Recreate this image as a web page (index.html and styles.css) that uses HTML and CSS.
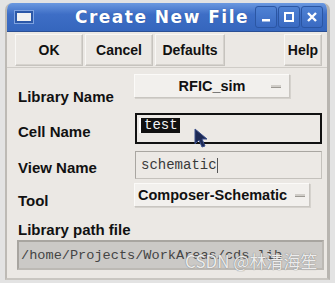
FILE: index.html
```
<!DOCTYPE html>
<html lang="en">

<head>
    <meta charset="UTF-8">
    <title>Create New File</title>
    <link rel="stylesheet" href="styles.css">
</head>

<body>
    <div class="window">
        <div class="titlebar">
            <span class="win-icon"></span>
            <span class="title">Create New File</span>
            <div class="win-buttons">
                <span class="wbtn"><svg width="14" height="14" viewBox="0 0 14 14"><rect x="3" y="9" width="8" height="2.5" fill="#fff"/></svg></span>
                <span class="wbtn"><svg width="14" height="14" viewBox="0 0 14 14"><rect x="3" y="3" width="8" height="8" fill="none" stroke="#fff" stroke-width="2"/></svg></span>
                <span class="wbtn"><svg width="14" height="14" viewBox="0 0 14 14"><path d="M3 3 L11 11 M11 3 L3 11" stroke="#fff" stroke-width="2.4"/></svg></span>
            </div>
        </div>

        <div class="toolbar">
            <button class="btn btn-ok">OK</button>
            <button class="btn btn-cancel">Cancel</button>
            <button class="btn btn-defaults">Defaults</button>
            <span class="spacer"></span>
            <button class="btn btn-help">Help</button>
        </div>

        <div class="form">
            <div class="row row-lib">
                <span class="label">Library Name</span>
                <div class="combo combo-lib">RFIC_sim<span class="combo-mark"></span></div>
            </div>
            <div class="row row-cell">
                <span class="label">Cell Name</span>
                <div class="field field-focus"><span class="sel">test</span></div>
            </div>
            <div class="row row-view">
                <span class="label">View Name</span>
                <div class="field">schematic<span class="caret"></span></div>
            </div>
            <div class="row row-tool">
                <span class="label">Tool</span>
                <div class="combo combo-tool">Composer-Schematic<span class="combo-mark"></span></div>
            </div>
            <div class="label path-label">Library path file</div>
            <div class="field field-path">/home/Projects/WorkAreas/cds.lib</div>
        </div>

        <svg class="pointer" width="16" height="22" viewBox="0 0 16 22">
            <path d="M1 1 L1 16 L5 12 L8 19 L11 18 L8 11 L13 11 Z" fill="#1d2a55" stroke="#3b4f8a" stroke-width="1"/>
        </svg>
        <div class="watermark">CSDN @林清海笙</div>
    </div>
</body>

</html>
```

FILE: styles.css
```
body {
    margin: 0;
    background: #e3e3e3;
    font-family: 'Liberation Sans', Arial, sans-serif;
}

.window {
    position: relative;
    margin: 3px 0 0 5px;
    width: 320px;
    height: 275px;
    background: #ebe8e4;
    border-left: 2px solid #bdbab5;
    border-right: 3px solid #b8b5b0;
    border-bottom: 2px solid #c9c6c1;
    border-radius: 7px 7px 0 0;
    overflow: hidden;
}

.titlebar {
    height: 28px;
    display: flex;
    align-items: center;
    background: linear-gradient(#6a98e0, #3e6ec6 40%, #3566bd);
    border-bottom: 1px solid #2a4f94;
    padding: 0 4px 0 8px;
}

.win-icon {
    width: 14px;
    height: 8px;
    background: #f2f2f2;
    border: 2px solid #2c58a8;
    box-shadow: 0 0 0 1px #7fa3e0;
}

.title {
    flex: 1;
    text-align: center;
    color: #fff;
    font-family: 'DejaVu Sans', sans-serif;
    font-weight: bold;
    font-size: 17px;
    letter-spacing: 1.5px;
    padding-left: 36px;
    text-shadow: 0 0 1px #2a4f94;
}

.win-buttons {
    display: flex;
    gap: 1px;
}

.wbtn {
    width: 20px;
    height: 20px;
    border: 1px solid #2b56a3;
    border-radius: 3px;
    background: linear-gradient(#4f82d4, #3a6ac2);
    display: flex;
    align-items: center;
    justify-content: center;
}

.toolbar {
    display: flex;
    gap: 2px;
    padding: 2px 5px 0 8px;
    height: 33px;
    border-bottom: 1px solid #cfccc7;
}

.btn {
    height: 32px;
    background: #ebe8e4;
    border: 1px solid #c6c3be;
    border-top-color: #f8f7f5;
    border-left-color: #f8f7f5;
    box-shadow: inset -1px -1px 0 #d6d3ce;
    font-family: 'Liberation Sans', Arial, sans-serif;
    font-weight: bold;
    font-size: 14px;
    color: #111;
    padding: 0;
}

.btn-ok {
    width: 68px;
}

.btn-cancel {
    width: 68px;
}

.btn-defaults {
    width: 70px;
}

.btn-help {
    width: 38px;
}

.spacer {
    flex: 1;
}

.form {
    padding: 6px 5px 0 11px;
}

.row {
    display: flex;
    align-items: center;
    justify-content: space-between;
}

.label {
    font-weight: bold;
    font-size: 15px;
    color: #111;
}

.row-lib {
    height: 26px;
    align-items: flex-start;
}

.row-lib .label {
    margin-top: 14px;
}

.row-cell {
    margin-top: 13px;
    height: 31px;
}

.row-cell .label {
    margin-top: 6px;
}

.row-view {
    margin-top: 7px;
    height: 28px;
}

.row-view .label {
    margin-top: 5px;
}

.row-tool {
    margin-top: 4px;
    height: 24px;
}

.row-tool .label {
    margin-top: 10px;
}

.combo {
    box-sizing: border-box;
    height: 24px;
    background: #f2f0ed;
    border: 1px solid #c9c6c1;
    border-top-color: #fbfaf8;
    border-left-color: #fbfaf8;
    box-shadow: 1px 1px 0 #d5d2cd;
    display: flex;
    align-items: center;
    justify-content: center;
    position: relative;
    font-weight: bold;
    font-size: 14.5px;
    color: #111;
}

.combo-lib {
    width: 156px;
    margin-right: 32px;
}

.combo-tool {
    width: 176px;
    margin-right: 12px;
    justify-content: flex-start;
    padding-left: 3px;
}

.combo-mark {
    position: absolute;
    right: 8px;
    top: 10px;
    width: 10px;
    height: 2px;
    background: #d0cdc8;
    border-bottom: 1px solid #9c9993;
}

.combo-tool .combo-mark {
    right: 4px;
}

.field {
    box-sizing: border-box;
    width: 187px;
    height: 28px;
    background: #ece9e5;
    border: 1px solid #c4c1bc;
    border-top-color: #a9a6a1;
    border-left-color: #a9a6a1;
    font-family: 'Liberation Mono', 'Courier New', monospace;
    font-size: 14px;
    color: #3a3a3a;
    display: flex;
    align-items: center;
    padding-left: 5px;
}

.field-focus {
    height: 31px;
    border: 2px solid #111;
    align-items: flex-start;
    padding: 3px 0 0 2px;
}

.sel {
    background: #111;
    color: #f4f4f4;
    padding: 0 2px 0 3px;
    border-left: 2px solid #fff;
    line-height: 15px;
}

.caret {
    width: 1px;
    height: 15px;
    background: #555;
}

.path-label {
    margin-top: 14px;
}

.field-path {
    width: 307px;
    height: 30px;
    margin: 2px 0 0 -1px;
    background: #cbc9c6;
    border: 2px solid #bcb9b4;
    border-top-color: #a8a5a0;
    border-left-color: #a8a5a0;
    color: #444;
    padding-left: 2px;
    font-size: 13.6px;
}

.pointer {
    position: absolute;
    left: 187px;
    top: 125px;
}

.watermark {
    position: absolute;
    left: 178px;
    top: 245px;
    font-family: 'Noto Sans CJK SC', 'Noto Sans', sans-serif;
    font-size: 17px;
    color: rgba(255, 255, 255, 0.85);
    text-shadow: 0 0 1px #8a8a8a, 0 0 1px #8a8a8a;
}
```
